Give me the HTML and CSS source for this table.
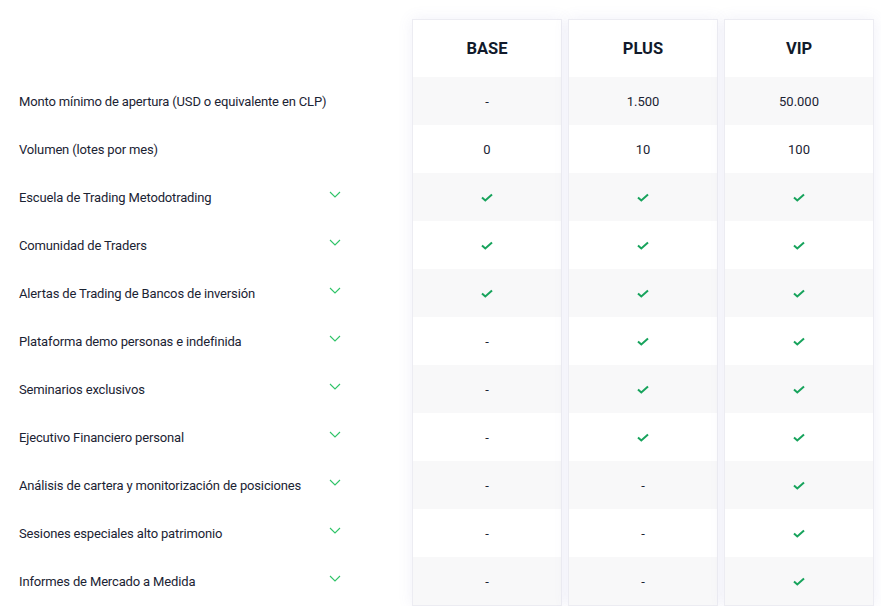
FILE: index.html
```html
<!DOCTYPE html>
<html lang="es">
<head>
<meta charset="utf-8">
<title>Planes</title>
<link rel="stylesheet" href="styles.css">
</head>
<body>
<svg width="0" height="0" class="defs">
  <defs>
    <symbol id="chev" viewBox="0 0 12 7"><polyline points="1,1 6,6 11,1" fill="none" stroke="#2fc468" stroke-width="1.1"/></symbol>
    <symbol id="chk" viewBox="0 0 12 9"><polyline points="1,4.5 4.3,7.5 11,1.5" fill="none" stroke="#17a35c" stroke-width="2"/></symbol>
  </defs>
</svg>
<div class="table">
  <div class="labels">
    <div class="lhead"></div>
    <div class="lrow">Monto mínimo de apertura (USD o equivalente en CLP)</div>
    <div class="lrow">Volumen (lotes por mes)</div>
    <div class="lrow"><span>Escuela de Trading Metodotrading</span><svg class="chev"><use href="#chev"/></svg></div>
    <div class="lrow"><span>Comunidad de Traders</span><svg class="chev"><use href="#chev"/></svg></div>
    <div class="lrow"><span>Alertas de Trading de Bancos de inversión</span><svg class="chev"><use href="#chev"/></svg></div>
    <div class="lrow"><span>Plataforma demo personas e indefinida</span><svg class="chev"><use href="#chev"/></svg></div>
    <div class="lrow"><span>Seminarios exclusivos</span><svg class="chev"><use href="#chev"/></svg></div>
    <div class="lrow"><span>Ejecutivo Financiero personal</span><svg class="chev"><use href="#chev"/></svg></div>
    <div class="lrow"><span>Análisis de cartera y monitorización de posiciones</span><svg class="chev"><use href="#chev"/></svg></div>
    <div class="lrow"><span>Sesiones especiales alto patrimonio</span><svg class="chev"><use href="#chev"/></svg></div>
    <div class="lrow"><span>Informes de Mercado a Medida</span><svg class="chev"><use href="#chev"/></svg></div>
  </div>

  <div class="card">
    <div class="chead">BASE</div>
    <div class="cell">-</div>
    <div class="cell">0</div>
    <div class="cell"><svg class="chk"><use href="#chk"/></svg></div>
    <div class="cell"><svg class="chk"><use href="#chk"/></svg></div>
    <div class="cell"><svg class="chk"><use href="#chk"/></svg></div>
    <div class="cell">-</div>
    <div class="cell">-</div>
    <div class="cell">-</div>
    <div class="cell">-</div>
    <div class="cell">-</div>
    <div class="cell">-</div>
  </div>

  <div class="card">
    <div class="chead">PLUS</div>
    <div class="cell">1.500</div>
    <div class="cell">10</div>
    <div class="cell"><svg class="chk"><use href="#chk"/></svg></div>
    <div class="cell"><svg class="chk"><use href="#chk"/></svg></div>
    <div class="cell"><svg class="chk"><use href="#chk"/></svg></div>
    <div class="cell"><svg class="chk"><use href="#chk"/></svg></div>
    <div class="cell"><svg class="chk"><use href="#chk"/></svg></div>
    <div class="cell"><svg class="chk"><use href="#chk"/></svg></div>
    <div class="cell">-</div>
    <div class="cell">-</div>
    <div class="cell">-</div>
  </div>

  <div class="card">
    <div class="chead">VIP</div>
    <div class="cell">50.000</div>
    <div class="cell">100</div>
    <div class="cell"><svg class="chk"><use href="#chk"/></svg></div>
    <div class="cell"><svg class="chk"><use href="#chk"/></svg></div>
    <div class="cell"><svg class="chk"><use href="#chk"/></svg></div>
    <div class="cell"><svg class="chk"><use href="#chk"/></svg></div>
    <div class="cell"><svg class="chk"><use href="#chk"/></svg></div>
    <div class="cell"><svg class="chk"><use href="#chk"/></svg></div>
    <div class="cell"><svg class="chk"><use href="#chk"/></svg></div>
    <div class="cell"><svg class="chk"><use href="#chk"/></svg></div>
    <div class="cell"><svg class="chk"><use href="#chk"/></svg></div>
  </div>
</div>
</body>
</html>
```

FILE: styles.css
```css
html, body {
  margin: 0;
  padding: 0;
  background: #ffffff;
}
body {
  font-family: Roboto, "Liberation Sans", sans-serif;
  color: #1b2333;
  font-size: 13px;
}
.defs {
  position: absolute;
  width: 0;
  height: 0;
}
.table {
  display: flex;
  gap: 6px;
  width: 881px;
}
.labels {
  width: 406px;
  flex: none;
  display: flex;
  flex-direction: column;
}
.lhead {
  height: 77px;
}
.lrow {
  height: 48px;
  display: flex;
  align-items: center;
  padding-left: 19px;
  letter-spacing: -0.15px;
}
.lrow span {
  width: 310px;
}
.chev {
  width: 12px;
  height: 7px;
  margin-top: -6px;
}
.card {
  width: 150px;
  flex: none;
  box-sizing: border-box;
  margin-top: 19px;
  border: 1px solid #ececf2;
  background: #fff;
  box-shadow: 0 0 14px rgba(110, 110, 190, 0.10);
  display: flex;
  flex-direction: column;
}
.chead {
  height: 57px;
  display: flex;
  align-items: center;
  justify-content: center;
  font-weight: 700;
  font-size: 16.5px;
  color: #111a2b;
}
.cell {
  height: 48px;
  display: flex;
  align-items: center;
  justify-content: center;
}
.cell:nth-child(even) {
  background: #f8f8f9;
}
.chk {
  width: 12px;
  height: 9px;
}
```
